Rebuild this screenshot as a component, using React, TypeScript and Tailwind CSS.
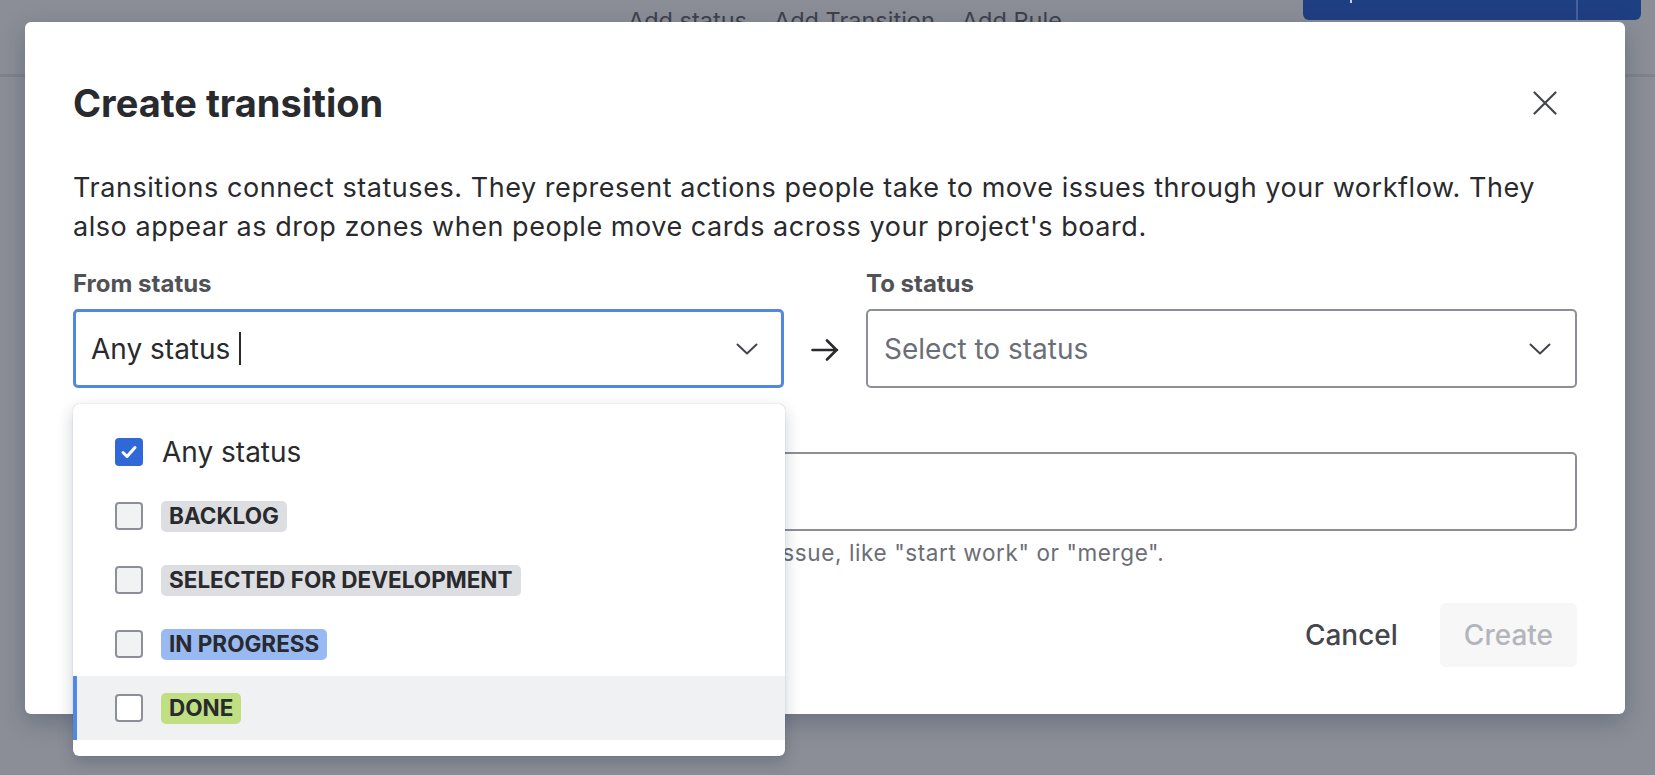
import React from "react";

type Status = {
  label: string;
  tone: "gray" | "blue" | "green";
};

const STATUSES: Status[] = [
  { label: "BACKLOG", tone: "gray" },
  { label: "SELECTED FOR DEVELOPMENT", tone: "gray" },
  { label: "IN PROGRESS", tone: "blue" },
  { label: "DONE", tone: "green" },
];

function Chevron() {
  return (
    <svg width="22" height="12" viewBox="0 0 22 12" fill="none" stroke="#44464d" strokeWidth={2} strokeLinecap="round" strokeLinejoin="round">
      <path d="M1.5 1.5 11 10.5l9.5-9" />
    </svg>
  );
}

function Checkbox({ checked, light }: { checked?: boolean; light?: boolean }) {
  if (checked) {
    return (
      <span className="flex h-[28px] w-[28px] shrink-0 items-center justify-center rounded-[4px] bg-[#3068d8]">
        <svg width="28" height="28" viewBox="0 0 28 28" fill="none" stroke="#fff" strokeWidth={3} strokeLinecap="round" strokeLinejoin="round">
          <path d="M8 14.5l4 4 8-9" />
        </svg>
      </span>
    );
  }
  return (
    <span
      className={`h-[28px] w-[28px] shrink-0 rounded-[4px] border-2 border-[#8c8f97] ${
        light ? "bg-white" : "bg-[#f1f2f4]"
      }`}
    />
  );
}

function Lozenge({ status }: { status: Status }) {
  const tone =
    status.tone === "blue"
      ? "bg-[#99b9f2]"
      : status.tone === "green"
      ? "bg-[#bfdf82]"
      : "bg-[#dddee2]";
  return (
    <span className={`inline-flex h-[31px] items-center rounded-[5px] px-[8px] text-[22.5px] font-bold leading-none text-[#292a2e] ${tone}`}>
      {status.label}
    </span>
  );
}

export default function App() {
  return (
    <div className="relative h-[775px] w-[1655px] overflow-hidden bg-[#8b8e96] font-['Inter',sans-serif]">
      {/* Page behind the overlay */}
      <header className="flex h-[77px] items-start border-b-[3px] border-[#80838b]">
        <nav className="ml-[628px] flex gap-[27px] pt-[6px] text-[23.5px] leading-[30px] text-[#3f424a]">
          <span>Add status</span>
          <span>Add Transition</span>
          <span>Add Rule</span>
        </nav>
        <div className="relative ml-auto mr-[14px] flex h-[20px] w-[338px] rounded-b-[6px] bg-[#1f3f83]">
          <span className="absolute left-[47px] top-0 h-[3px] w-[2px] bg-[#c9cfdd]" />
          <div className="w-[275px] border-r-2 border-[#4a6196]" />
        </div>
      </header>

      {/* Modal */}
      <div className="absolute left-[25px] top-[22px] w-[1600px] rounded-[6px] bg-white px-[48px] pb-[47px] pt-[57px] shadow-[0_8px_24px_rgba(9,30,66,0.25)]">
        <div className="flex items-center justify-between">
          <h1 className="text-[38px] font-bold leading-[48px] text-[#292a2e]">Create transition</h1>
          <svg className="mr-[20px]" width="24" height="24" viewBox="0 0 24 24" fill="none" stroke="#44464d" strokeWidth={2.2} strokeLinecap="round">
            <path d="M1.5 1.5l21 21M22.5 1.5l-21 21" />
          </svg>
        </div>

        <p className="mt-[41px] text-[27px] leading-[39px] tracking-[0.55px] text-[#292a2e]">
          Transitions connect statuses. They represent actions people take to move issues through your workflow. They also appear as drop zones when people move cards across your project's board.
        </p>

        <div className="mt-[24px] grid grid-cols-[1fr_82px_1fr]">
          <div>
            <label className="block text-[24px] font-bold leading-[28px] text-[#505258]">From status</label>
            <div className="relative mt-[11px]">
              <div className="flex h-[79px] items-center rounded-[5px] border-[3px] border-[#5287e2] pl-[15px] pr-[23px]">
                <span className="text-[28px] text-[#292a2e]">Any status</span>
                <span className="ml-[9px] h-[33px] w-[2px] bg-[#292a2e]" />
                <span className="ml-auto">
                  <Chevron />
                </span>
              </div>

              {/* Open dropdown */}
              <div className="absolute left-0 top-[95px] z-10 w-[712px] rounded-[6px] bg-white py-[16px] shadow-[0_6px_16px_rgba(9,30,66,0.22),0_0_1px_rgba(9,30,66,0.35)]">
                <div className="flex h-[64px] items-center gap-[19px] pl-[42px]">
                  <Checkbox checked />
                  <span className="text-[28px] text-[#292a2e]">Any status</span>
                </div>
                {STATUSES.map((s, i) => {
                  const active = i === STATUSES.length - 1;
                  return (
                    <div
                      key={s.label}
                      className={`flex h-[64px] items-center gap-[18px] pl-[42px] ${
                        active ? "bg-[#f0f1f3] shadow-[inset_4px_0_0_#5287e2]" : ""
                      }`}
                    >
                      <Checkbox light={active} />
                      <Lozenge status={s} />
                    </div>
                  );
                })}
              </div>
            </div>
          </div>

          <div className="flex items-end justify-center pb-[27px]">
            <svg width="28" height="22" viewBox="0 0 28 22" fill="none" stroke="#292a2e" strokeWidth={2.6} strokeLinecap="round" strokeLinejoin="round">
              <path d="M1.5 11h24.5M16 1.5 25.5 11 16 20.5" />
            </svg>
          </div>

          <div>
            <label className="block text-[24px] font-bold leading-[28px] text-[#505258]">To status</label>
            <div className="mt-[11px] flex h-[79px] items-center rounded-[5px] border-2 border-[#8c8f97] pl-[16px] pr-[24px]">
              <span className="text-[28px] text-[#6b6e76]">Select to status</span>
              <span className="ml-auto">
                <Chevron />
              </span>
            </div>
          </div>
        </div>

        <div className="mt-[26px]">
          <label className="block text-[24px] font-bold leading-[28px] text-[#505258]">Name</label>
          <div className="mt-[10px] h-[79px] rounded-[5px] border-2 border-[#8c8f97]" />
          <p className="mt-[8px] text-[22.5px] leading-[28px] tracking-[0.6px] text-[#6b6e76]">
            Give the transition a tidy name that describes how it moves an issue, like "start work" or "merge".
          </p>
        </div>

        <div className="mt-[36px] flex justify-end gap-[18px]">
          <button className="h-[64px] rounded-[6px] px-[24px] text-[28px] font-medium text-[#44464d]">Cancel</button>
          <button className="h-[64px] rounded-[6px] bg-[#f7f7f8] px-[24px] text-[28px] font-medium text-[#b3b5bb]">Create</button>
        </div>
      </div>
    </div>
  );
}
